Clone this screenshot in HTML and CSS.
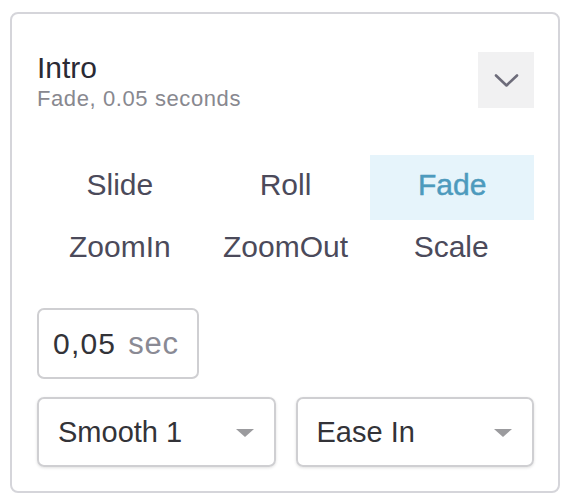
FILE: index.html
```html
<!DOCTYPE html>
<html>
<head>
<meta charset="utf-8">
<link rel="stylesheet" href="styles.css">
</head>
<body>
<div class="card">
  <div class="header">
    <div class="titles">
      <div class="title">Intro</div>
      <div class="subtitle">Fade, 0.05 seconds</div>
    </div>
    <div class="toggle">
      <svg width="56" height="56" viewBox="0 0 56 56"><path d="M18 23.5 L28.5 33.5 L39 23.5" fill="none" stroke="#6d6c7a" stroke-width="2.6" stroke-linecap="round" stroke-linejoin="round"/></svg>
    </div>
  </div>
  <div class="effects">
    <div class="effect">Slide</div>
    <div class="effect">Roll</div>
    <div class="effect active">Fade</div>
    <div class="effect">ZoomIn</div>
    <div class="effect">ZoomOut</div>
    <div class="effect">Scale</div>
  </div>
  <div class="duration">
    <span class="value">0,05</span><span class="unit">sec</span>
  </div>
  <div class="selects">
    <div class="select"><span>Smooth 1</span><span class="caret"></span></div>
    <div class="select"><span>Ease In</span><span class="caret"></span></div>
  </div>
</div>
</body>
</html>
```
FILE: styles.css
```css
html, body {
  margin: 0;
  padding: 0;
  background: #ffffff;
}
body {
  font-family: "Liberation Sans", Arial, sans-serif;
}
.card {
  box-sizing: border-box;
  width: 550px;
  margin: 12px 0 0 10px;
  border: 2px solid #d5d5da;
  border-radius: 8px;
  padding: 38px 24px 24px 25px;
}
.header {
  display: flex;
  justify-content: space-between;
  align-items: flex-start;
  height: 62px;
}
.title {
  font-size: 30px;
  line-height: 32px;
  color: #2a2a34;
}
.subtitle {
  font-size: 22px;
  line-height: 30px;
  letter-spacing: 0.6px;
  color: #88888f;
}
.toggle {
  width: 56px;
  height: 56px;
  background: #f1f1f2;
}
.toggle svg {
  display: block;
}
.effects {
  margin-top: 41px;
  display: grid;
  grid-template-columns: 1fr 1fr 1fr;
  grid-template-rows: 62px 62px;
}
.effect {
  box-sizing: border-box;
  height: 65px;
  padding-bottom: 6px;
  display: flex;
  align-items: center;
  justify-content: center;
  font-size: 30px;
  color: #4b4a5a;
}
.effect.active {
  background: #e6f4fb;
  color: #4d9abd;
  margin-left: 2px;
  -webkit-text-stroke: 0.5px #4d9abd;
}
.duration {
  box-sizing: border-box;
  margin-top: 29px;
  width: 162px;
  height: 71px;
  border: 2px solid #cfcfd2;
  border-radius: 7px;
  display: flex;
  align-items: center;
  padding-left: 14px;
  font-size: 30px;
}
.value {
  color: #333338;
  letter-spacing: 1.2px;
}
.unit {
  color: #8a8a94;
  margin-left: 12px;
  font-size: 31px;
  letter-spacing: 0.8px;
}
.selects {
  margin-top: 18px;
  display: flex;
  gap: 20px;
}
.select {
  box-sizing: border-box;
  flex: 1;
  height: 70px;
  border: 2px solid #cfcfd2;
  border-radius: 7px;
  box-shadow: 0 1px 3px rgba(0, 0, 0, 0.12);
  display: flex;
  align-items: center;
  justify-content: space-between;
  padding: 0 20px 0 19px;
  font-size: 29px;
  color: #333338;
}
.caret {
  width: 0;
  height: 0;
  border-left: 9px solid transparent;
  border-right: 9px solid transparent;
  border-top: 8px solid #9b9b9e;
  margin-top: 2px;
}
```
